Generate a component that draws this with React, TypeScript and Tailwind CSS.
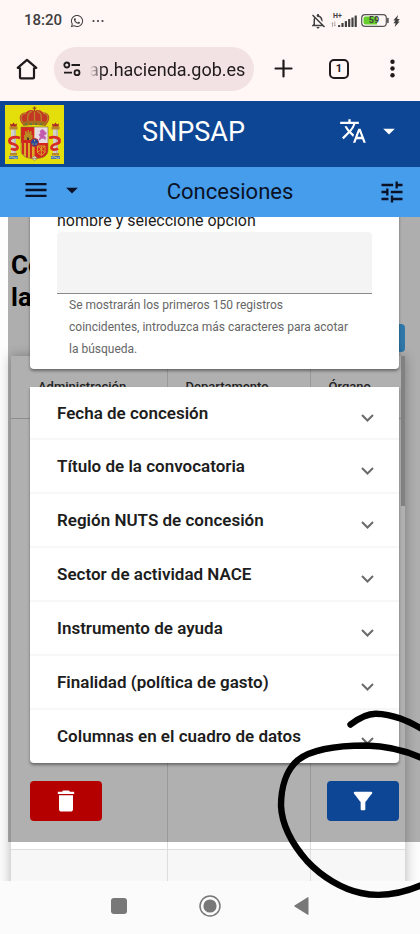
import { useState } from 'react'
import { FaWhatsapp } from 'react-icons/fa'
import {
  MdArrowDropDown,
  MdDelete,
  MdFilterAlt,
  MdMenu,
  MdOutlineNotificationsOff,
  MdTranslate,
  MdTune,
} from 'react-icons/md'

const FILTERS = [
  'Fecha de concesión',
  'Título de la convocatoria',
  'Región NUTS de concesión',
  'Sector de actividad NACE',
  'Instrumento de ayuda',
  'Finalidad (política de gasto)',
  'Columnas en el cuadro de datos',
]

export default function App() {
  return (
    <div className="relative flex h-screen flex-col overflow-hidden bg-white font-[Roboto,sans-serif] text-[#1d1d1d]">
      <StatusBar />
      <BrowserBar />
      <SiteHeader />
      <main className="relative min-h-0 flex-1 overflow-hidden bg-[#fdfdfd]">
        <ResultsPage />
        <FilterDialog />
      </main>
      <SystemNav />
      <PenMarks />
    </div>
  )
}

function StatusBar() {
  return (
    <div className="flex h-10 shrink-0 items-center bg-[#fff7f6] pl-6 pr-5 pt-px text-[#404040]">
      <span className="text-[15px] font-medium">18:20</span>
      <FaWhatsapp className="ml-2 size-[14px]" />
      <svg className="ml-2 h-1 w-3" viewBox="0 0 12 4" fill="currentColor">
        <circle cx="1.5" cy="2" r="1.1" />
        <circle cx="6" cy="2" r="1.1" />
        <circle cx="10.5" cy="2" r="1.1" />
      </svg>
      <div className="ml-auto flex items-center">
        <MdOutlineNotificationsOff className="size-[18px]" />
        <div className="relative ml-1 h-[15px] w-[26px]">
          <span className="absolute left-0.5 top-0 text-[7px] font-bold leading-[7px]">H+</span>
          <svg className="size-full" viewBox="0 0 26 15" fill="currentColor">
            <path d="M1.5 14V9.5M3.8 8.5V13" stroke="#b5a9a8" strokeWidth="1" />
            <path d="M.3 10.8l1.2-1.6 1.2 1.6zM2.6 12l1.2 1.6L5 12z" fill="#b5a9a8" />
            <rect x="7" y="12" width="2.2" height="2" rx=".5" />
            <rect x="10.4" y="10" width="2.2" height="4" rx=".5" />
            <rect x="13.8" y="8" width="2.2" height="6" rx=".5" />
            <rect x="17.1" y="6" width="2.2" height="8" rx=".5" />
            <rect x="20.4" y="4.5" width="2.2" height="9.5" rx=".5" />
            <rect x="23.6" y="2.5" width="2.2" height="11.5" rx=".5" />
          </svg>
        </div>
        <div className="relative ml-1 h-[13px] w-[28px]">
          <svg className="size-full" viewBox="0 0 28 13">
            <rect x=".7" y=".7" width="24.6" height="11.6" rx="3.4" fill="none" stroke="#555" strokeWidth="1.2" />
            <path d="M4.5 2.4H16v8.2H4.5a2 2 0 0 1-2-2V4.4a2 2 0 0 1 2-2z" fill="#67cf2c" />
            <path d="M26.9 4.5v4" stroke="#444" strokeWidth="1.5" strokeLinecap="round" />
          </svg>
          <span className="absolute inset-x-0 top-0 pr-0.5 text-center text-[9px] font-bold leading-[13px]">59</span>
        </div>
        <svg className="ml-1 h-3 w-[7px]" viewBox="0 0 7 12" fill="currentColor">
          <path d="M5 0L.3 5.6h2.2L.4 8.200h2.200L1.700 12 6.700 6.600H4.700L6.800 4H4.200z" />
        </svg>
      </div>
    </div>
  )
}

function BrowserBar() {
  const [url, setUrl] = useState('ap.hacienda.gob.es')
  return (
    <div className="flex h-[61px] shrink-0 items-center bg-[#fff7f6] pb-1 pl-4 pr-5 text-[#1f1a1b]">
      <button aria-label="Inicio">
        <svg className="h-6 w-[22px]" viewBox="0 0 22 24" fill="none" stroke="currentColor" strokeWidth="2.2" strokeLinejoin="round">
          <path d="M4 10.800H1.700L11 2.800l9.300 8H18M4 10.500v9.900a1 1 0 0 0 1 1h12a1 1 0 0 0 1-1v-9.900" />
        </svg>
      </button>
      <div className="ml-4 flex h-11 min-w-0 flex-1 items-center rounded-full bg-[#f3e2e3] pl-[9px] pr-1">
        <svg className="h-4 w-[18px] shrink-0" viewBox="0 0 18 16" fill="none" stroke="currentColor" strokeWidth="1.8">
          <circle cx="3.8" cy="4" r="2.5" />
          <path d="M8.5 4H17M1 11.7h8" />
          <circle cx="14" cy="11.7" r="2.5" />
        </svg>
        <input
          aria-label="Dirección web"
          value={url}
          onChange={e => setUrl(e.target.value)}
          className="ml-2 min-w-0 flex-1 bg-transparent pt-0.5 text-[18px] outline-none [mask-image:linear-gradient(to_right,transparent_1px,black_14px)]"
        />
      </div>
      <button aria-label="Nueva pestaña" className="ml-5">
        <svg className="size-[19px]" viewBox="0 0 19 19" stroke="currentColor" strokeWidth="2.2" strokeLinecap="round">
          <path d="M9.5 1.5v16M1.5 9.5h16" />
        </svg>
      </button>
      <button
        aria-label="Pestañas"
        className="ml-9 size-5 rounded-[5px] border-2 border-[#1f1a1b] text-[11px] font-bold leading-4"
      >
        1
      </button>
      <button aria-label="Menú del navegador" className="ml-9 flex w-[15px] justify-center">
        <svg className="h-[19px] w-[5px]" viewBox="0 0 5 19" fill="currentColor">
          <circle cx="2.5" cy="2.8" r="2.2" />
          <circle cx="2.5" cy="9.5" r="2.2" />
          <circle cx="2.5" cy="16.2" r="2.2" />
        </svg>
      </button>
    </div>
  )
}

function SiteHeader() {
  return (
    <header className="shrink-0">
      <div className="flex h-[66px] items-center bg-[#0d4694] pl-[5px] pr-[19px] text-white">
        <CoatOfArms />
        <h1 className="flex-1 pb-1 pr-4 text-center text-[27px] leading-8">SNPSAP</h1>
        <button aria-label="Idioma" className="flex items-center gap-1 pb-1.5">
          <MdTranslate className="size-7" />
          <MdArrowDropDown className="-mr-0.5 ml-1 size-7" />
        </button>
      </div>
      <div className="flex h-[50px] items-center bg-[#459dec] pl-[22px] pr-[14px] text-[#0b1226]">
        <button aria-label="Menú" className="flex items-center pb-1">
          <MdMenu className="size-7" />
          <MdArrowDropDown className="ml-2 size-7" />
        </button>
        <h2 className="flex-1 pr-1 text-center text-[22px] leading-8">Concesiones</h2>
        <button aria-label="Filtros">
          <MdTune className="size-7" />
        </button>
      </div>
    </header>
  )
}

function ResultsPage() {
  return (
    <div className="pl-[11px] pr-[15px] pt-8 text-black">
      <h3 className="text-[26px] font-bold leading-8">
        Concesiones de
        <br />
        la Administración
      </h3>
      <div className="flex justify-end pb-1 pt-[11px]">
        <button aria-label="Exportar" className="h-7 w-24 rounded bg-[#44aef5]" />
      </div>
      <div className="relative bg-white shadow-[0_0_12px_rgba(0,0,0,0.3)]">
        <table className="w-full table-fixed text-left text-[13px]">
          <thead>
            <tr className="h-[62px] border-b border-[#ccc] text-[#333]">
              <th className="w-[156px] border-r border-[#ddd] pl-[27px] font-medium">Administración</th>
              <th className="w-[143px] border-r border-[#ddd] pl-[18px] font-medium">Departamento</th>
              <th className="pl-[18px] font-medium">Órgano</th>
            </tr>
          </thead>
          <tbody>
            <tr className="h-[431px] border-b border-[#ddd]">
              <td className="border-r border-[#ddd]" />
              <td className="border-r border-[#ddd]" />
              <td />
            </tr>
            <tr className="h-20 bg-[#f7f7f7]">
              <td className="border-r border-[#ddd]" />
              <td className="border-r border-[#ddd]" />
              <td />
            </tr>
          </tbody>
        </table>
        <div className="absolute right-0 top-0 h-[150px] w-1 bg-[#bcbcbc]" />
      </div>
    </div>
  )
}

function FilterDialog() {
  const [body, setBody] = useState('')
  return (
    <div className="absolute left-2 right-0 top-0 bg-black/31 pb-[21px] pl-[22px] pr-[21px]">
      <section className="rounded-b bg-white px-[27px] pb-[9px] shadow-[0_2px_3px_rgba(0,0,0,0.4)]">
        {/* the label is scrolled half way under the header */}
        <label htmlFor="organo" className="-mt-2 block h-[23px] pt-px text-[16px] leading-[22px]">
          nombre y seleccione opción
        </label>
        <input
          id="organo"
          value={body}
          onChange={e => setBody(e.target.value)}
          className="block h-[62px] w-full rounded-t border-b border-[#8a8a8a] bg-[#f4f4f4] px-3 outline-none"
        />
        <p className="pl-3 pr-6 text-[12px] leading-[22px] text-[#666]">
          Se mostrarán los primeros 150 registros coincidentes, introduzca más caracteres para acotar la búsqueda.
        </p>
      </section>

      <section className="mt-[18px] rounded-b bg-white shadow-[0_2px_3px_rgba(0,0,0,0.4)]">
        {FILTERS.map(name => (
          <button
            key={name}
            className="flex h-[54px] w-full items-center justify-between border-b-2 border-[#f7f7f7] pl-[27px] pr-[25px] pt-0.5 text-left text-[17px] font-semibold first:h-[53px] last:h-[53px] last:border-b-0 last:pt-0"
          >
            {name}
            <svg className="mt-2 h-2 w-[13px]" viewBox="0 0 13 8" fill="none" stroke="#6b6b6b" strokeWidth="2">
              <path d="M1 1l5.5 5.5L12 1" />
            </svg>
          </button>
        ))}
      </section>

      <div className="mt-[18px] flex justify-between">
        <button aria-label="Limpiar" className="flex h-10 w-[72px] items-center justify-center rounded bg-[#b50000] text-white">
          <MdDelete className="size-7" />
        </button>
        <button aria-label="Filtrar" className="flex h-10 w-[72px] items-center justify-center rounded bg-[#0d4694] text-white">
          <MdFilterAlt className="size-7" />
        </button>
      </div>
    </div>
  )
}

function SystemNav() {
  return (
    <nav className="flex h-[53px] shrink-0 items-center justify-center gap-[43px] bg-[#fbfbfb] pb-1 text-[#787878]">
      <button aria-label="Recientes" className="flex w-12 justify-center">
        <span className="size-4 rounded-[3px] bg-[#787878]" />
      </button>
      <button aria-label="Inicio" className="flex w-12 justify-center">
        <svg className="size-[22px]" viewBox="0 0 22 22">
          <circle cx="11" cy="11" r="10" fill="none" stroke="currentColor" strokeWidth="1.5" />
          <circle cx="11" cy="11" r="6.6" fill="currentColor" />
        </svg>
      </button>
      <button aria-label="Atrás" className="flex w-12 justify-center">
        <svg className="h-[18px] w-[15px]" viewBox="0 0 15 18" fill="currentColor">
          <path d="M14.5.6v16.8a.5.5 0 0 1-.8.4L.5 9.4a.5.5 0 0 1 0-.8L13.7.2a.5.5 0 0 1 .8.4z" />
        </svg>
      </button>
    </nav>
  )
}

// Freehand circle around the filter button
function PenMarks() {
  return (
    <svg
      className="pointer-events-none absolute bottom-0 right-0 h-[234px] w-[150px]"
      viewBox="270 700 150 234"
      fill="none"
      stroke="#000"
      strokeWidth="6.4"
      strokeLinecap="round"
      strokeLinejoin="round"
    >
      <path d="M350.5 724.5C359 718 367 713.5 376 713.7C393 714 408 721 424 730" />
      <path d="M424 759C405 750 388 746 366 745.5C338 745.5 312 749 298 760C286 770 281 788 281 806C282 826 293 845 307 861C322 877 342 889 361 893C383 898 404 893 424 884" />
    </svg>
  )
}

function CoatOfArms() {
  return (
    <svg className="size-[59px] shrink-0" viewBox="0 0 59 59" role="img" aria-label="Escudo de España">
      <rect width="59" height="59" fill="#e4df0b" />
      {/* pillars */}
      {[4.5, 46.5].map(x => (
        <g key={x}>
          <rect x={x + 1.5} y="24" width="5" height="26" fill="#d4d2c8" />
          <path d={`M${x + 5.5} 24v26`} stroke="#aaa9a0" strokeWidth="1" />
          <rect x={x} y="21.5" width="8" height="3" fill="#b9852a" />
          <path d={`M${x + 1} 21.5l-.5-3 2 1 1.5-2 1.5 2 2-1-.5 3z`} fill="#ae2a25" />
          <rect x={x + 0.5} y="48" width="7" height="2.5" fill="#b9852a" />
          <path d={`M${x - 0.5} 51h9v3h-9z`} fill="#4674a6" />
          <path d={`M${x} 52.5q2-1.5 4 0t4 0`} stroke="#e6e6e6" strokeWidth=".7" fill="none" />
        </g>
      ))}
      <path d="M15 33C9 31 4 33 4.5 36.5C5 40 13 38 12.5 43C12 45 8 45 6 43.5" fill="none" stroke="#d72b25" strokeWidth="2.8" />
      <path d="M44 33C50 31 55 33 54.5 36.5C54 40 46 38 46.5 43C47 45 51 45 53 43.5" fill="none" stroke="#d72b25" strokeWidth="2.8" />
      {/* crown */}
      <path d="M18 20C12 13 15 7 21 7.5C24 4.5 27 4.5 29.5 6C32 4.5 35 4.5 38 7.5C44 7 47 13 41 20z" fill="#c33824" />
      <path d="M19 19C14 13 16 8 21 8.5M24 19C21 13 23 7 27 6.5M29.5 19V6M35 19C38 13 36 7 32 6.5M40 19C45 13 43 8 38 8.5" stroke="#b9822c" strokeWidth="1.3" fill="none" />
      <path d="M17.5 17q12-2.5 24 0l-.8 4q-11-2-22.4 0z" fill="#a56f20" />
      <path d="M20 19.2h19" stroke="#3f7c50" strokeWidth="1.2" strokeDasharray="2 3" />
      <path d="M29.5 1.5v5M27.7 3.2h3.6" stroke="#8b4b1f" strokeWidth="1.2" />
      {/* shield */}
      <path d="M16 22h13.5v16H16z" fill="#d32620" />
      <path d="M29.5 22H43v16H29.5z" fill="#e5dce4" />
      <path d="M16 38h13.5v15.5C21 53.5 16 51 16 45z" fill="#dda827" />
      <path d="M18 38v11.5M22 38v14.5M26 38v15.3" stroke="#cc2b20" strokeWidth="2" />
      <path d="M29.5 38H43v7c0 6-5 8.5-13.5 8.5z" fill="#d32620" />
      <path d="M19 35v-5h1v-4h1.5v1.5h1V25h1.5v2.5h1V26h1.5v4h1v5z" fill="#b98a22" />
      <path d="M22 35v-2.5h2V35z" fill="#4b3b2c" />
      <path d="M34 35l1.5-3-1.5-2.5 2-1-1-2.5 2.5-1.5 2 1.5-.5 2 2-1v2l-2.5 1.5 2 1.5-.5 2.5-1.5-1.5-2 .5z" fill="#c25aae" stroke="#c25aae" strokeWidth=".8" />
      <path d="M32.5 41h7.5v6.5l-3.7 3-3.8-3zM32.5 41l7.5 6.5M40 41l-7.5 6.5M36.3 41v9" stroke="#dba529" strokeWidth="1" fill="none" />
      <path d="M26.5 53.5q3-5 6 0l-3 2z" fill="#d8d3c4" stroke="#8b6b32" strokeWidth=".5" />
      <path d="M16 22h27v23c0 6-5 8.5-13.5 8.5S16 51 16 45z" fill="none" stroke="#8c6a31" strokeWidth=".6" />
      <circle cx="29.5" cy="37.5" r="4" fill="#274898" stroke="#c42b27" strokeWidth="1" />
      <path d="M29.5 34.8v1.6M28 38.3v1.5M31 38.3v1.5" stroke="#cfc06b" strokeWidth=".9" />
    </svg>
  )
}
